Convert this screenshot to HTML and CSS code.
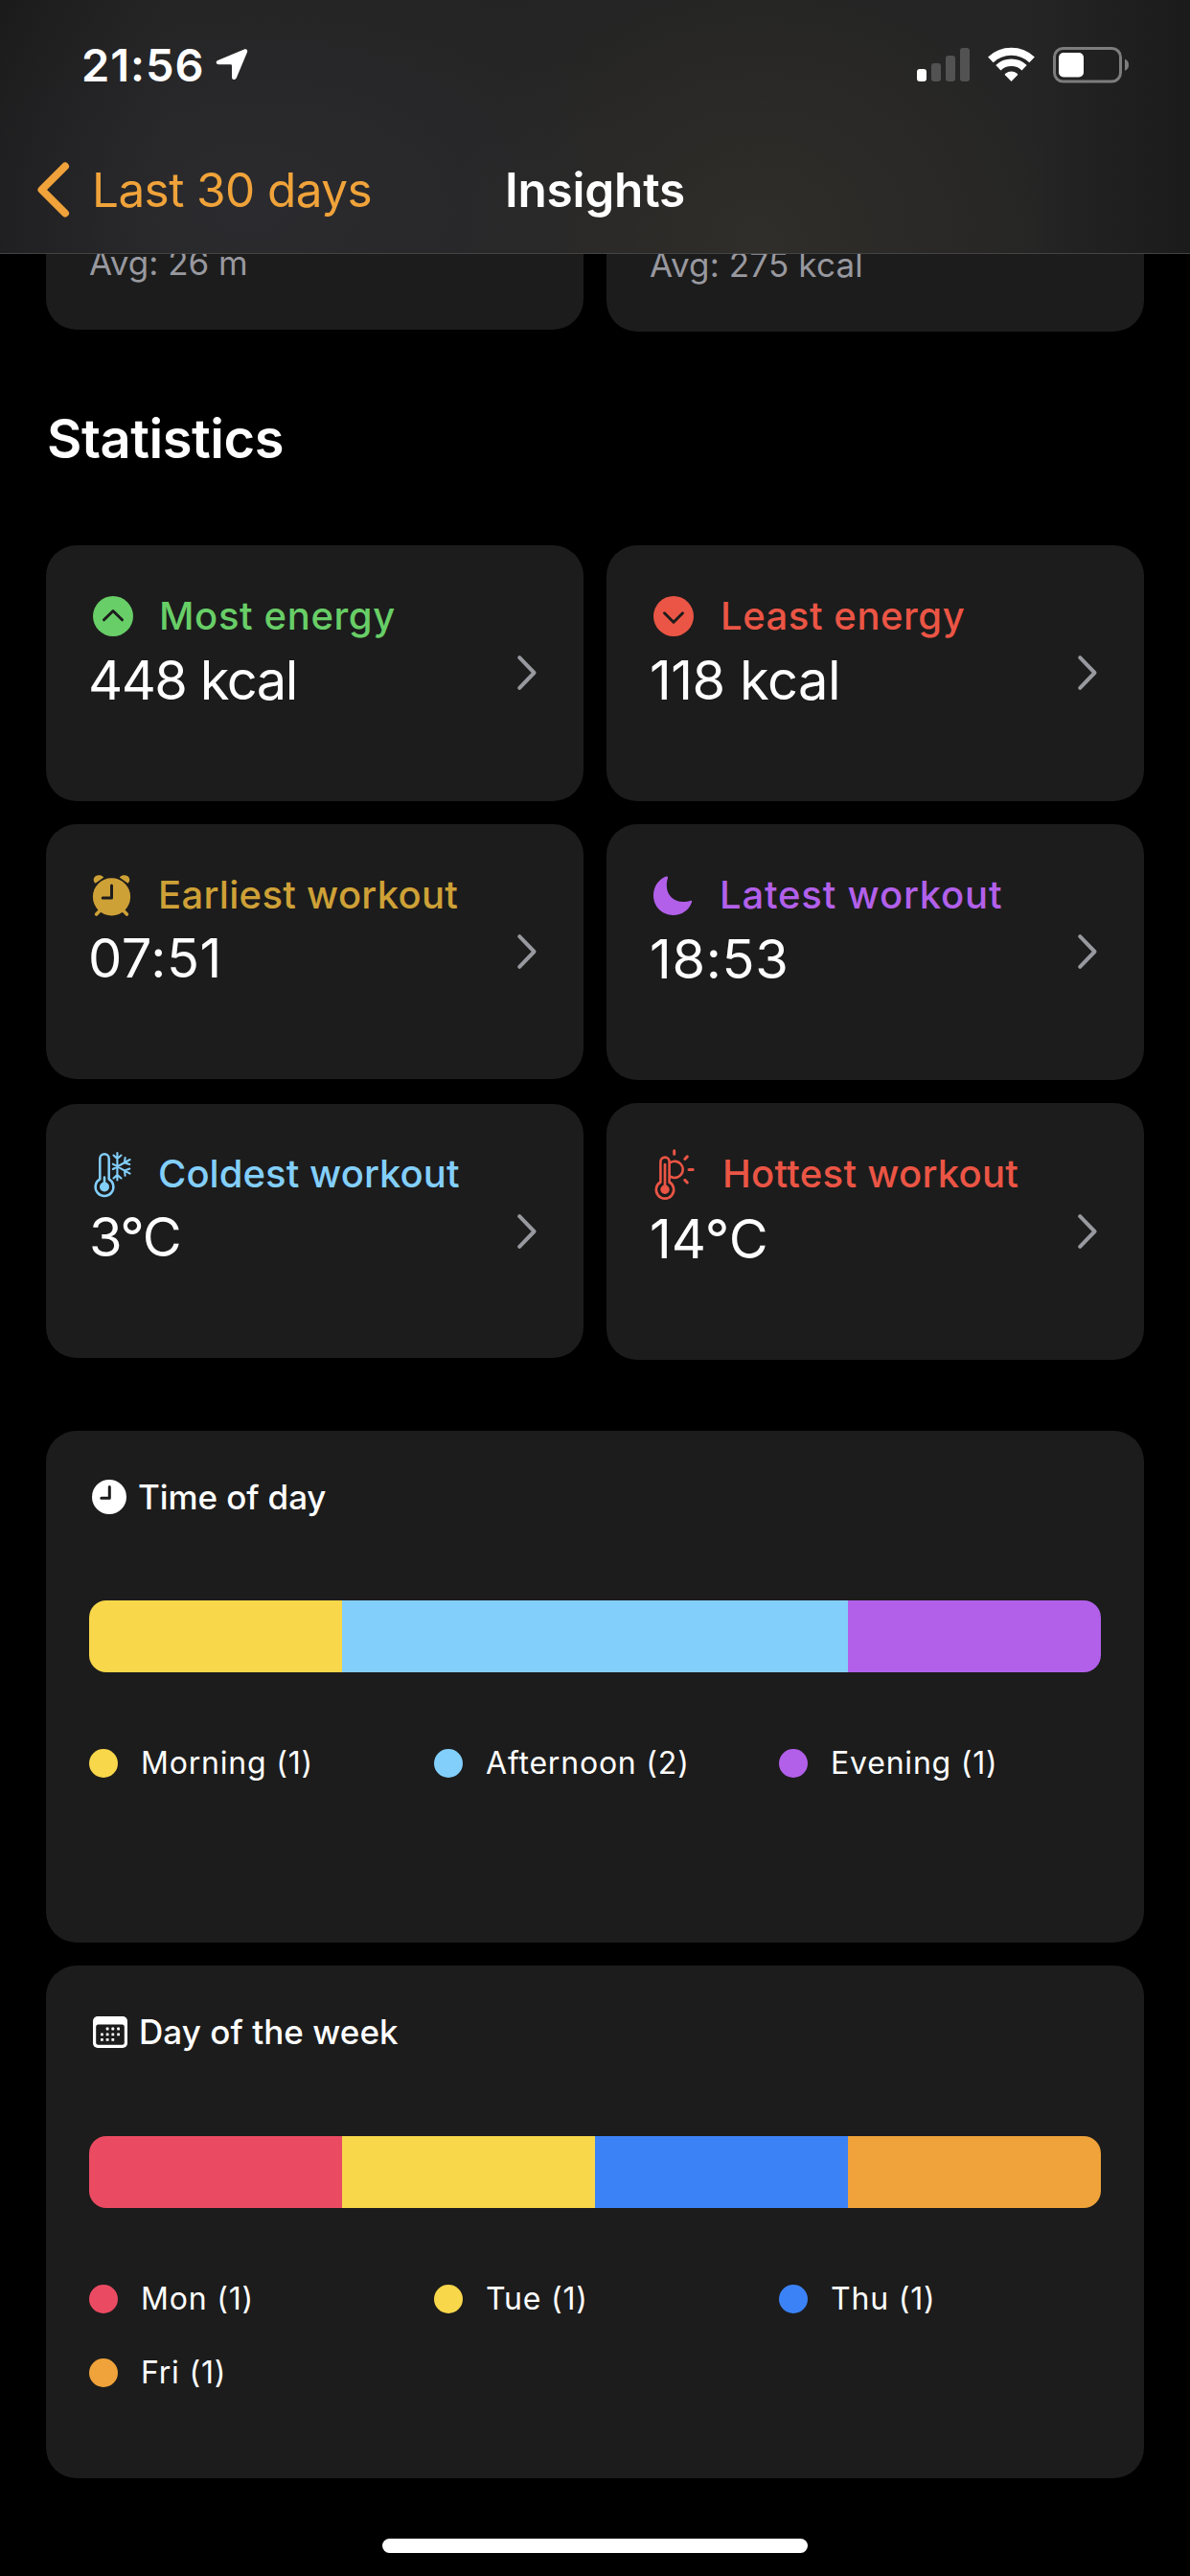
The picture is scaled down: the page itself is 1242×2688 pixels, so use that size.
FILE: index.html
```html
<!DOCTYPE html>
<html lang="en">
<head>
<meta charset="utf-8">
<title>Insights</title>
<link rel="stylesheet" href="styles.css">
</head>
<body>
<header class="header">
  <div class="status">
    <div class="status-left">
      <span class="clock">21:56</span>
      <svg class="location" width="34" height="34" viewBox="0 0 34 34"><path d="M29.3 1.7C32.3 0.5 33.9 2.1 32.9 4.8L21.8 31.3C20.6 34 17 33.5 17 30.5V18.6Q17 17.2 15.6 17.2H3.2C.2 17.2-.2 14.2 2.3 13.1Z" fill="#fff"/></svg>
    </div>
    <div class="status-right">
      <svg width="55" height="38" viewBox="0 0 55 38"><rect y="23" width="10" height="13" rx="3" fill="#fff"/><g fill="#525252"><rect x="15" y="17" width="10" height="19" rx="3"/><rect x="30" y="9" width="10" height="27" rx="3"/><rect x="45" y="1" width="10" height="35" rx="3"/></g></svg>
      <svg width="49" height="38" viewBox="0 0 49 38"><g fill="none" stroke="#fff"><path d="M2.9 13.3A31.3 31.3 0 0 1 46.1 13.3" stroke-width="8"/><path d="M10.9 21.7A19.7 19.7 0 0 1 38.1 21.7" stroke-width="7.5"/></g><path d="M24.5 36L18 29.3Q17.3 28.4 18.3 27.7Q24.5 23.5 30.7 27.7Q31.7 28.4 31 29.3Z" fill="#fff"/></svg>
      <svg width="79" height="38" viewBox="0 0 79 38"><rect x="1.5" y="1.5" width="69" height="34.5" rx="9" fill="none" stroke="#7d7d7d" stroke-width="3"/><rect x="6" y="6" width="26" height="25.5" rx="5" fill="#fff"/><path d="M75 12.5Q79 14.5 79 18.8T75 25Z" fill="#7d7d7d"/></svg>
    </div>
  </div>
  <nav class="nav">
    <a class="back">
      <svg width="35" height="58" viewBox="0 0 35 58"><path d="M30 4.5L5.5 29L30 53.5" fill="none" stroke="currentColor" stroke-width="8" stroke-linecap="round" stroke-linejoin="round"/></svg>
      <span>Last 30 days</span>
    </a>
    <h1 class="title">Insights</h1>
  </nav>
</header>

<main class="content">
  <section class="averages">
    <div class="average">Avg: 26 m</div>
    <div class="average average-energy">Avg: 275 kcal</div>
  </section>

  <h2 class="heading">Statistics</h2>

  <section class="stats">
    <article class="stat most">
      <div class="stat-body">
        <h3 class="stat-title"><svg width="42" height="42" viewBox="0 0 42 42"><circle cx="21" cy="21" r="21" fill="currentColor"/><path d="M11.5 24.8L21 15.5L30.5 24.8" class="cut"/></svg><span>Most energy</span></h3>
        <p class="stat-value">448 kcal</p>
      </div>
      <svg class="chevron" width="20" height="36" viewBox="0 0 20 36"><path d="M2.2 2.2L17.5 18L2.2 33.8"/></svg>
    </article>
    <article class="stat least">
      <div class="stat-body">
        <h3 class="stat-title"><svg width="42" height="42" viewBox="0 0 42 42"><circle cx="21" cy="21" r="21" fill="currentColor"/><path d="M11.5 17.8L21 27.2L30.5 17.8" class="cut"/></svg><span>Least energy</span></h3>
        <p class="stat-value">118 kcal</p>
      </div>
      <svg class="chevron" width="20" height="36" viewBox="0 0 20 36"><path d="M2.2 2.2L17.5 18L2.2 33.8"/></svg>
    </article>
    <article class="stat earliest">
      <div class="stat-body">
        <h3 class="stat-title"><svg width="40" height="43" viewBox="0 0 40 43"><g fill="currentColor"><path d="M2.5 8.8C-1.8 4.5 2.5-.2 6.5.3C9 .4 11.5 2 11 2.8Z"/><path d="M36.5 8.8C40.8 4.5 36.5-.2 32.5.3C30 .4 27.5 2 28 2.8Z"/><circle cx="19.5" cy="22.8" r="19.6"/></g><path d="M7 37.5L3.6 41M32 37.5L35.4 41" fill="none" stroke="currentColor" stroke-width="3.6" stroke-linecap="round"/><path d="M19.5 11V24H10.2" class="cut"/></svg><span>Earliest workout</span></h3>
        <p class="stat-value">07:51</p>
      </div>
      <svg class="chevron" width="20" height="36" viewBox="0 0 20 36"><path d="M2.2 2.2L17.5 18L2.2 33.8"/></svg>
    </article>
    <article class="stat latest">
      <div class="stat-body">
        <h3 class="stat-title"><svg width="41" height="41" viewBox="0 0 41 41"><path fill="currentColor" d="M13 .6C5 4 0 11.5 0 20.3C0 32 9 41 20.7 41C29.5 41 37 36 40 27.6C40.6 26 39.5 25.6 38.2 26C36 26.8 34 27.1 31 27.1C21 27.1 13.8 20 13.8 10C13.8 7 14.2 4.5 15 2.2C15.4 .8 14.6 0 13 .6Z"/></svg><span>Latest workout</span></h3>
        <p class="stat-value">18:53</p>
      </div>
      <svg class="chevron" width="20" height="36" viewBox="0 0 20 36"><path d="M2.2 2.2L17.5 18L2.2 33.8"/></svg>
    </article>
    <article class="stat coldest">
      <div class="stat-body">
        <h3 class="stat-title"><svg width="41" height="50" viewBox="0 0 41 50"><g fill="none" stroke="currentColor" stroke-linecap="round"><path d="M7.3 30.4V9A4.7 4.7 0 0 1 16.7 9V30.4A9.4 9.4 0 1 1 7.3 30.4Z" stroke-width="2.5"/><path d="M12 38V28.5" stroke-width="2.6"/><path d="M25.4 3V31.5M20.8 14.7L38.6 24.6M20.8 20L38.6 10M21.5 5.5L25.4 9L29.5 5.5M21.5 29.5L25.4 26L29.5 29.5M33.6 8L33 13.2L38.3 15M33.6 26.8L33 21.5L38.3 19.5" stroke-width="2.1"/></g><circle cx="12" cy="38.5" r="5" fill="currentColor"/></svg><span>Coldest workout</span></h3>
        <p class="stat-value">3°C</p>
      </div>
      <svg class="chevron" width="20" height="36" viewBox="0 0 20 36"><path d="M2.2 2.2L17.5 18L2.2 33.8"/></svg>
    </article>
    <article class="stat hottest">
      <div class="stat-body">
        <h3 class="stat-title"><svg width="45" height="56" viewBox="6 5 45 56"><g fill="none" stroke="currentColor" stroke-linecap="round"><path d="M13.4 41.5V20.2A4.6 4.6 0 0 1 22.6 20.2V41.5A9.2 9.2 0 1 1 13.4 41.5Z" stroke-width="2.6"/><path d="M18 49V23.2" stroke-width="2.7"/><path d="M23.5 21.1A8.6 8.6 0 1 1 23.5 35.6" stroke-width="2.6"/><path d="M27.7 8.7V12.2M38.8 17.5L41.3 14.9M43 28.4H47.2M38.8 39.4L41.3 42" stroke-width="3"/></g><circle cx="18" cy="49.3" r="4.7" fill="currentColor"/></svg><span>Hottest workout</span></h3>
        <p class="stat-value">14°C</p>
      </div>
      <svg class="chevron" width="20" height="36" viewBox="0 0 20 36"><path d="M2.2 2.2L17.5 18L2.2 33.8"/></svg>
    </article>
  </section>

  <section class="chart time-of-day">
    <h3 class="chart-title"><svg width="36" height="36" viewBox="0 0 36 36"><circle cx="18" cy="18" r="18" fill="#fff"/><path d="M18.3 7.5V19.3H9.8" class="cut"/></svg><span>Time of day</span></h3>
    <div class="bar"><i class="yellow" style="width:25%"></i><i class="sky" style="width:50%"></i><i class="purple" style="width:25%"></i></div>
    <ul class="legend">
      <li><i class="dot yellow"></i>Morning (1)</li>
      <li><i class="dot sky"></i>Afternoon (2)</li>
      <li><i class="dot purple"></i>Evening (1)</li>
    </ul>
  </section>

  <section class="chart day-of-week">
    <h3 class="chart-title"><svg width="36" height="33" viewBox="0 0 36 33"><rect width="36" height="33" rx="5" fill="#fff"/><rect x="3.2" y="8.4" width="29.6" height="21.4" rx="2.5" fill="#1c1c1c"/><g fill="#fff"><rect x="13.7" y="11.6" width="2.8" height="2.8" rx=".6"/><rect x="19.4" y="11.6" width="2.8" height="2.8" rx=".6"/><rect x="25.2" y="11.6" width="2.8" height="2.8" rx=".6"/><rect x="8" y="17.5" width="2.8" height="2.8" rx=".6"/><rect x="13.7" y="17.5" width="2.8" height="2.8" rx=".6"/><rect x="19.4" y="17.5" width="2.8" height="2.8" rx=".6"/><rect x="25.2" y="17.5" width="2.8" height="2.8" rx=".6"/><rect x="8" y="23" width="2.8" height="2.8" rx=".6"/><rect x="13.7" y="23" width="2.8" height="2.8" rx=".6"/><rect x="19.4" y="23" width="2.8" height="2.8" rx=".6"/></g></svg><span>Day of the week</span></h3>
    <div class="bar"><i class="rose" style="width:25%"></i><i class="yellow" style="width:25%"></i><i class="blue" style="width:25%"></i><i class="orange" style="width:25%"></i></div>
    <ul class="legend">
      <li><i class="dot rose"></i>Mon (1)</li>
      <li><i class="dot yellow"></i>Tue (1)</li>
      <li><i class="dot blue"></i>Thu (1)</li>
      <li><i class="dot orange"></i>Fri (1)</li>
    </ul>
  </section>
</main>
<div class="home-indicator"></div>
</body>
</html>
```

FILE: styles.css
```css
* { box-sizing: border-box; margin: 0; padding: 0; }

body {
  width: 1242px;
  height: 2688px;
  overflow: hidden;
  background: #000;
  color: #fff;
  font-family: Inter, "Liberation Sans", sans-serif;
}

svg { display: block; flex: none; overflow: visible; }

.cut {
  fill: none;
  stroke: #1c1c1c;
  stroke-width: 3;
  stroke-linecap: round;
  stroke-linejoin: round;
}

.header {
  position: relative;
  z-index: 1;
  height: 265px;
  padding-top: 38px;
  border-bottom: 1px solid #444;
  background:
    radial-gradient(440px 260px at 260px 220px, rgba(52, 51, 60, .45), transparent),
    radial-gradient(320px 280px at 790px 250px, rgba(62, 57, 48, .45), transparent),
    linear-gradient(90deg, #1b1b1b, #242424 14%, #252525 86%, #1b1b1b);
}

.status {
  display: flex;
  justify-content: space-between;
  height: 60px;
  padding: 0 64px 0 85px;
}

.status-left, .status-right { display: flex; align-items: center; }
.status-right { gap: 19px; }

.clock {
  font-size: 47px;
  line-height: 60px;
  font-weight: 600;
  letter-spacing: .95px;
}

.location { margin: 0 0 2px 11px; }

.nav {
  display: grid;
  grid-template-columns: 1fr auto 1fr;
  align-items: center;
  height: 132px;
  margin-top: 34px;
  padding: 0 38px;
  font-size: 49.5px;
  line-height: 60px;
}

.back {
  display: flex;
  align-items: center;
  gap: 23px;
  color: #f0a33a;
  letter-spacing: -.59px;
  white-space: nowrap;
}

.title {
  font-size: inherit;
  font-weight: 600;
  letter-spacing: -.18px;
}

.content { padding: 0 48px; }

/* Cards partly scrolled under the header */
.averages {
  display: grid;
  grid-template-columns: 1fr 1fr;
  gap: 24px;
  height: 122px;
  margin-top: -41px;
}

.average {
  height: 120px;
  padding: 29px 45px;
  border-radius: 32px;
  background: #1c1c1c;
  color: #98989f;
  font-size: 35px;
  line-height: 42px;
}

.average-energy {
  height: 122px;
  padding-top: 31px;
  letter-spacing: .14px;
}

.heading {
  margin: 78px 0 77px;
  padding-left: 1px;
  font-size: 56px;
  line-height: 68px;
  font-weight: 600;
  letter-spacing: -.47px;
}

/* Statistics grid */
.stats {
  display: grid;
  grid-template-columns: 1fr 1fr;
  grid-template-rows: 267px 267px 268px;
  gap: 24px;
}

.stat {
  display: flex;
  align-items: flex-start;
  padding: 50px 49px 0 45px;
  border-radius: 32px;
  background: #1c1c1c;
}

.stat-body { flex: 1; }

.stat-title {
  display: flex;
  align-items: center;
  gap: 27px;
  height: 48px;
  padding-left: 4px;
  font-size: 40px;
  font-weight: 500;
  line-height: 48px;
  white-space: nowrap;
}

.stat-value {
  margin-top: 9px;
  font-size: 56px;
  line-height: 68px;
}

.chevron {
  margin-top: 65px;
  fill: none;
  stroke: #98989f;
  stroke-width: 4;
  stroke-linecap: round;
  stroke-linejoin: round;
}

.most .stat-title { color: #68ce67; letter-spacing: .62px; }
.most .stat-value { margin-left: -1px; letter-spacing: -1.5px; }
.least .stat-title { color: #eb5545; gap: 28px; letter-spacing: .55px; }
.least .stat-value { letter-spacing: -.49px; }
.earliest { height: 266px; }
.earliest .stat-title { color: #cea137; gap: 28px; letter-spacing: .3px; }
.earliest .stat-value { margin: 8px 0 0 -1px; letter-spacing: .57px; }
.latest .stat-title { color: #b260ea; gap: 28px; letter-spacing: .82px; }
.latest .stat-value { letter-spacing: .65px; }
.coldest { height: 265px; margin-top: 1px; padding-top: 49px; }
.coldest .stat-title { color: #83cffb; letter-spacing: .06px; }
.coldest .stat-value { margin-top: 8px; letter-spacing: -1.5px; }
.coldest .chevron { margin-top: 66px; }
.hottest .stat-title { color: #eb5545; letter-spacing: .28px; }
.hottest .stat-value { margin-top: 10px; }
.hottest .chevron { margin-top: 66px; }

/* Distribution charts */
.chart {
  height: 534px;
  padding: 47px 45px 0;
  border-radius: 32px;
  background: #1c1c1c;
}

.time-of-day { margin-top: 74px; }
.day-of-week { height: 535px; margin-top: 24px; }

.chart-title {
  display: flex;
  align-items: center;
  gap: 12px;
  height: 44px;
  padding-left: 3px;
  font-size: 35px;
  font-weight: 500;
  line-height: 44px;
  letter-spacing: -.1px;
}

.day-of-week .chart-title { padding-left: 4px; letter-spacing: .06px; }

.bar {
  display: flex;
  height: 75px;
  margin-top: 86px;
  border-radius: 18px;
  overflow: hidden;
}

.day-of-week .bar { margin-top: 87px; }

.legend {
  display: grid;
  grid-template-columns: repeat(3, 360px);
  row-gap: 37px;
  margin-top: 75px;
  list-style: none;
  font-size: 32px;
  line-height: 40px;
  letter-spacing: .8px;
}

.legend li {
  display: flex;
  align-items: center;
  gap: 24px;
  white-space: nowrap;
}

.dot { width: 30px; height: 30px; border-radius: 50%; }

.yellow { background: #f8d74a; }
.sky { background: #83cffb; }
.purple { background: #b260ea; }
.rose { background: #eb4b62; }
.blue { background: #3b82f7; }
.orange { background: #f0a33a; }

.home-indicator {
  width: 444px;
  height: 15px;
  margin: 63px auto 0;
  border-radius: 8px;
  background: #fff;
}
```
